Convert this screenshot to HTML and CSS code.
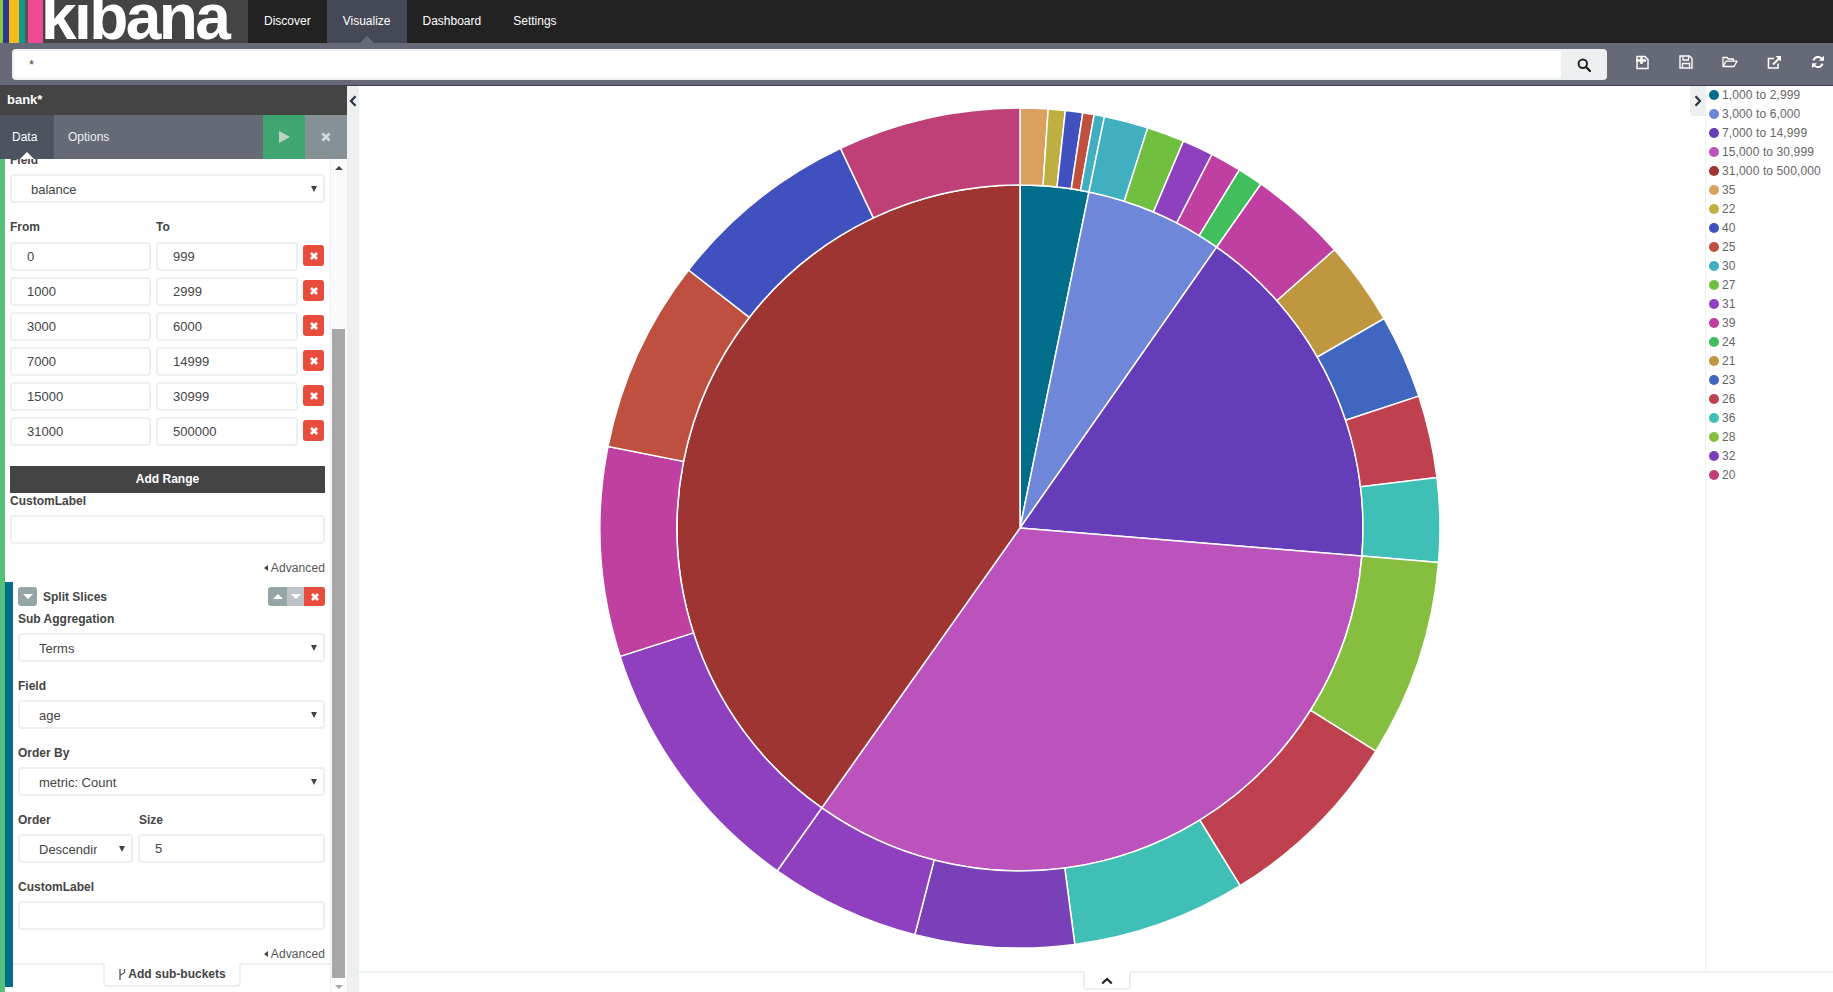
FILE: index.html
```html
<!DOCTYPE html>
<html lang="en">
<head>
<meta charset="UTF-8" />
<title>Visualize - Kibana</title>
<link rel="stylesheet" href="styles.css">
</head>
<body>

<nav class="navbar">
  <a class="logo">
    <span class="stripe s1"></span><span class="stripe s2"></span><span class="stripe s3"></span><span class="stripe s4"></span><span class="stripe s5"></span><span class="stripe s6"></span>
    <span class="logo-text">kibana</span>
  </a>
  <a class="nav-link">Discover</a>
  <a class="nav-link active">Visualize</a>
  <a class="nav-link">Dashboard</a>
  <a class="nav-link">Settings</a>
</nav>

<div class="toolbar">
  <div class="search">
    <input class="search-input" type="text" value="*">
    <button class="search-btn">
      <svg width="14" height="14" viewBox="0 0 14 14"><circle cx="5.8" cy="5.8" r="4.2" fill="none" stroke="#222" stroke-width="2"/><path d="M9 9l4 4" stroke="#222" stroke-width="2.4" stroke-linecap="round"/></svg>
    </button>
  </div>
  <div class="actions">
    <button class="action">
      <svg width="15" height="15" viewBox="0 0 15 15"><path d="M2 1.5h8l3 3v9H2z" fill="none" stroke="#fff" stroke-width="1.4"/><path d="M6.5 1v8M1 5.5h10" stroke="#fff" stroke-width="2.4"/></svg>
    </button>
    <button class="action">
      <svg width="14" height="14" viewBox="0 0 14 14"><path d="M1 1h9.5L13 3.5V13H1z" fill="none" stroke="#fff" stroke-width="1.4"/><path d="M4 1.5v3.5h5.5V1.5M3.5 13V8.5h7V13" fill="none" stroke="#fff" stroke-width="1.3"/></svg>
    </button>
    <button class="action">
      <svg width="16" height="14" viewBox="0 0 16 14"><path d="M1 11.5V2.5h4l1.3 1.5h5.2v2.2M1.2 11.5L4 6.2h11l-3 5.3z" fill="none" stroke="#fff" stroke-width="1.3" stroke-linejoin="round"/></svg>
    </button>
    <button class="action">
      <svg width="15" height="15" viewBox="0 0 15 15"><path d="M11 8.5V13H1.5V3.5H7" fill="none" stroke="#fff" stroke-width="1.6"/><path d="M6 9.5l6-6" stroke="#fff" stroke-width="2"/><path d="M8.5 1h5.5v5.5z" fill="#fff"/></svg>
    </button>
    <button class="action">
      <svg width="14" height="14" viewBox="0 0 14 14"><path d="M2.4 5.4A4.9 4.9 0 0 1 10.6 3.4" fill="none" stroke="#fff" stroke-width="2"/><path d="M13 0.8v5h-5z" fill="#fff"/><path d="M11.6 8.6A4.9 4.9 0 0 1 3.4 10.6" fill="none" stroke="#fff" stroke-width="2"/><path d="M1 13.2v-5h5z" fill="#fff"/></svg>
    </button>
  </div>
</div>

<main class="main">
  <aside class="sidebar">
    <div class="index-title">bank*</div>
    <div class="side-tabs">
      <a class="side-tab active">Data</a>
      <a class="side-tab">Options</a>
      <span class="tabs-fill"></span>
      <button class="run-btn"><svg width="13" height="14" viewBox="0 0 13 14"><path d="M1 1l11 6-11 6z" fill="#b9d6c4"/></svg></button>
      <button class="cancel-btn"><svg width="10" height="10" viewBox="0 0 10 10"><path d="M1.5 1.5l7 7M8.5 1.5l-7 7" stroke="#d4d9da" stroke-width="2.8"/></svg></button>
    </div>

    <div class="side-body">
      <div class="editor">
        <div class="editor-inner">
          <div class="group">
            <label class="lbl">Field</label>
            <div class="sel"><select class="ctl"><option>balance</option></select></div>
          </div>

          <div class="ranges">
            <label class="lbl">From</label>
            <label class="lbl">To</label>
            <span></span>
          </div>
          <div class="ranges rows">
            <input class="ctl txt" value="0"><input class="ctl txt" value="999"><button class="del"><svg width="10" height="10" viewBox="0 0 10 10"><path d="M2 2l6 6M8 2l-6 6" stroke="#fff" stroke-width="2.6"/></svg></button>
            <input class="ctl txt" value="1000"><input class="ctl txt" value="2999"><button class="del"><svg width="10" height="10" viewBox="0 0 10 10"><path d="M2 2l6 6M8 2l-6 6" stroke="#fff" stroke-width="2.6"/></svg></button>
            <input class="ctl txt" value="3000"><input class="ctl txt" value="6000"><button class="del"><svg width="10" height="10" viewBox="0 0 10 10"><path d="M2 2l6 6M8 2l-6 6" stroke="#fff" stroke-width="2.6"/></svg></button>
            <input class="ctl txt" value="7000"><input class="ctl txt" value="14999"><button class="del"><svg width="10" height="10" viewBox="0 0 10 10"><path d="M2 2l6 6M8 2l-6 6" stroke="#fff" stroke-width="2.6"/></svg></button>
            <input class="ctl txt" value="15000"><input class="ctl txt" value="30999"><button class="del"><svg width="10" height="10" viewBox="0 0 10 10"><path d="M2 2l6 6M8 2l-6 6" stroke="#fff" stroke-width="2.6"/></svg></button>
            <input class="ctl txt" value="31000"><input class="ctl txt" value="500000"><button class="del"><svg width="10" height="10" viewBox="0 0 10 10"><path d="M2 2l6 6M8 2l-6 6" stroke="#fff" stroke-width="2.6"/></svg></button>
          </div>

          <button class="add-range">Add Range</button>

          <div class="custom">
            <label class="lbl">CustomLabel</label>
            <input class="ctl txt">
          </div>
          <a class="advanced">Advanced</a>
        </div>

        <section class="bucket">
          <div class="bucket-head">
            <button class="toggle"><span class="caret-down"></span></button>
            <span class="bucket-title">Split Slices</span>
            <div class="btn-group">
              <button class="up"><span class="caret-up"></span></button>
              <button class="down"><span class="caret-down"></span></button>
              <button class="remove"><svg width="10" height="10" viewBox="0 0 10 10"><path d="M2 2l6 6M8 2l-6 6" stroke="#fff" stroke-width="2.6"/></svg></button>
            </div>
          </div>

          <div class="group">
            <label class="lbl">Sub Aggregation</label>
            <div class="sel"><select class="ctl"><option>Terms</option></select></div>
          </div>
          <div class="group">
            <label class="lbl">Field</label>
            <div class="sel"><select class="ctl"><option>age</option></select></div>
          </div>
          <div class="group">
            <label class="lbl">Order By</label>
            <div class="sel"><select class="ctl"><option>metric: Count</option></select></div>
          </div>
          <div class="group order-row">
            <div class="order-col">
              <label class="lbl">Order</label>
              <div class="sel"><select class="ctl"><option>Descending</option></select></div>
            </div>
            <div class="size-col">
              <label class="lbl">Size</label>
              <input class="ctl txt" value="5">
            </div>
          </div>
          <div class="group">
            <label class="lbl">CustomLabel</label>
            <input class="ctl txt">
          </div>
          <a class="advanced">Advanced</a>

          <div class="sub-bar">
            <a class="sub-tab">
              <svg width="9" height="13" viewBox="0 0 9 13"><path d="M3 1v11M7.5 1v3c0 2-4.5 2-4.5 4" fill="none" stroke="#444" stroke-width="1.2"/></svg>
              Add sub-buckets
            </a>
          </div>
        </section>
      </div>

      <div class="scrollbar">
        <span class="arrow-up"></span>
        <span class="thumb"></span>
        <span class="arrow-down"></span>
      </div>
    </div>
  </aside>

  <div class="gutter">
    <svg width="8" height="12" viewBox="0 0 8 12"><path d="M6.5 1.2L2 6l4.5 4.8" fill="none" stroke="#2d3240" stroke-width="2.2"/></svg>
  </div>

  <div class="viz">
    <div class="viz-top">
      <div class="chart"><svg id="pie" width="844" height="844" viewBox="-422 -422 844 844"></svg></div>
      <div class="legend-wrap">
        <button class="legend-toggle">
          <svg width="8" height="12" viewBox="0 0 8 12"><path d="M1.5 1.2L6 6l-4.5 4.8" fill="none" stroke="#2d3240" stroke-width="2.2"/></svg>
        </button>
        <ul class="legend" id="legend"></ul>
      </div>
    </div>
    <div class="spy">
      <a class="spy-tab">
        <svg width="12" height="8" viewBox="0 0 12 8"><path d="M1.2 6.5L6 2l4.8 4.5" fill="none" stroke="#222" stroke-width="2.2"/></svg>
      </a>
    </div>
  </div>
</main>

<script src="app.js"></script>
</body>
</html>
```

FILE: styles.css
```css
* {
  box-sizing: border-box;
}
html, body {
  height: 100%;
}
body {
  margin: 0;
  overflow: hidden;
  font-family: "Liberation Sans", Arial, sans-serif;
  font-size: 12px;
  color: #444;
  background: #fff;
  display: flex;
  flex-direction: column;
}
button {
  border: none;
  padding: 0;
  font: inherit;
  display: flex;
  align-items: center;
  justify-content: center;
}

/* top nav */
.navbar {
  height: 43px;
  flex: none;
  display: flex;
  background: #222;
}
.logo {
  width: 248px;
  height: 43px;
  display: flex;
  overflow: hidden;
  background: #444;
}
.stripe {
  height: 43px;
  flex: none;
}
.s1 { width: 3px; background: #8cc63f; }
.s2 { width: 6px; background: #2b3a8f; }
.s3 { width: 10px; background: #f5bb18; }
.s4 { width: 6px; background: #0f9a8c; }
.s5 { width: 3px; background: #555; }
.s6 { width: 15px; background: #ee4a93; }
.logo-text {
  font-size: 64px;
  font-weight: bold;
  line-height: 43px;
  letter-spacing: -2.6px;
  color: #fff;
  margin: -4px 0 0 -2px;
}
.nav-link {
  position: relative;
  padding: 0 16px;
  line-height: 42px;
  color: #fff;
}
.nav-link.active {
  background: #454955;
}
.nav-link.active::after {
  content: "";
  position: absolute;
  left: 50%;
  bottom: 0;
  margin-left: -7px;
  border: 7px solid transparent;
  border-top: 0;
  border-bottom-color: #656a76;
}

/* search bar */
.toolbar {
  height: 43px;
  flex: none;
  display: flex;
  align-items: flex-start;
  padding: 6px 0 0 12px;
  background: #656a76;
  border-bottom: 1px solid #3c4048;
}
.search {
  display: flex;
  width: 1595px;
  height: 31px;
}
.search-input {
  flex: 1;
  height: 31px;
  border: 2px solid #ecf0f1;
  border-right: 0;
  border-radius: 4px 0 0 4px;
  padding: 0 15px;
  font: 13px "Liberation Sans", Arial, sans-serif;
  color: #444;
  outline: none;
}
.search-btn {
  width: 46px;
  height: 31px;
  background: #ecf0f1;
  border-radius: 0 4px 4px 0;
}
.actions {
  margin-left: auto;
  display: flex;
  gap: 14px;
  height: 26px;
}
.action {
  width: 30px;
  height: 26px;
  background: none;
}

/* page body */
.main {
  flex: 1;
  min-height: 0;
  display: flex;
}
.sidebar {
  width: 347px;
  flex: none;
  display: flex;
  flex-direction: column;
}
.index-title {
  height: 29px;
  flex: none;
  padding-left: 7px;
  line-height: 28px;
  font-size: 13px;
  font-weight: bold;
  color: #fff;
  background: #444;
}
.side-tabs {
  height: 44px;
  flex: none;
  display: flex;
  background: #656a76;
}
.side-tab {
  position: relative;
  padding: 0 14px;
  line-height: 44px;
  color: #ecf0f1;
}
.side-tab.active {
  width: 54px;
  padding: 0 12px;
  background: #4e5360;
  color: #fff;
}
.side-tab.active::after {
  content: "";
  position: absolute;
  left: 50%;
  bottom: 0;
  margin-left: -7px;
  border: 7px solid transparent;
  border-top: 0;
  border-bottom-color: #fff;
}
.tabs-fill {
  flex: 1;
}
.run-btn {
  width: 42px;
  background: #3fa672;
}
.cancel-btn {
  width: 42px;
  background: #869196;
}

.side-body {
  flex: 1;
  min-height: 0;
  display: flex;
  overflow: hidden;
}
.editor {
  width: 330px;
  flex: none;
  border-left: 5px solid #55c07a;
  overflow: hidden;
}
.editor-inner {
  margin-top: -6px;
  padding: 0 5px 7px;
}

.lbl {
  display: block;
  height: 14px;
  line-height: 14px;
  margin-bottom: 7px;
  font-weight: bold;
  color: #444;
}
.ctl {
  display: block;
  width: 100%;
  height: 29px;
  border: 2px solid #ecf0f1;
  border-radius: 4px;
  background: #fff;
  font: 13px "Liberation Sans", Arial, sans-serif;
  color: #444;
  outline: none;
}
.txt {
  padding: 0 15px;
}
select.ctl {
  appearance: none;
  padding: 2px 34px 0 19px;
}
.sel {
  position: relative;
}
.sel::after {
  content: "";
  position: absolute;
  right: 8px;
  top: 12px;
  border: 3px solid transparent;
  border-bottom: 0;
  border-top: 6px solid #444;
}
.group {
  margin-bottom: 17px;
}
.ranges {
  display: grid;
  grid-template-columns: 141px 142px 21px;
  column-gap: 5px;
}
.ranges .lbl {
  margin-bottom: 8px;
}
.rows {
  row-gap: 6px;
}
.del {
  width: 21px;
  height: 21px;
  margin-top: 3px;
  background: #e74c3c;
  border-radius: 3px;
}
.add-range {
  width: 100%;
  height: 27px;
  margin-top: 20px;
  padding-bottom: 2px;
  font-weight: bold;
  color: #fff;
  background: #444;
}
.custom {
  margin-top: 1px;
}
.advanced {
  display: block;
  height: 14px;
  line-height: 14px;
  margin-top: 17px;
  text-align: right;
  letter-spacing: 0.1px;
  color: #555;
}
.advanced::before {
  content: "";
  display: inline-block;
  margin-right: 3px;
  vertical-align: 1px;
  border: 3px solid transparent;
  border-left: 0;
  border-right: 4px solid #444;
}

/* split slices */
.bucket {
  border-left: 8px solid #006e8a;
  padding: 5px 5px 0;
}
.bucket .advanced {
  margin-top: 0;
}
.bucket-head {
  display: flex;
  align-items: center;
  height: 19px;
  margin-bottom: 6px;
}
.toggle {
  width: 19px;
  height: 19px;
  background: #95a5a6;
  border-radius: 3px;
}
.bucket-title {
  margin-left: 6px;
  font-weight: bold;
}
.btn-group {
  margin-left: auto;
  display: flex;
  height: 19px;
}
.btn-group button {
  height: 19px;
}
.up {
  width: 19px;
  background: #95a5a6;
  border-radius: 3px 0 0 3px;
}
.down {
  width: 17px;
  background: #bdc3c7;
}
.remove {
  width: 21px;
  background: #e74c3c;
  border-radius: 0 3px 3px 0;
}
.caret-down, .caret-up {
  width: 0;
  height: 0;
  border: 5px solid transparent;
}
.caret-down {
  border-bottom: 0;
  border-top-color: #fff;
}
.caret-up {
  border-top: 0;
  border-bottom-color: #fff;
}
.order-row {
  display: flex;
  gap: 5px;
}
.order-col {
  width: 115px;
  flex: none;
}
.size-col {
  flex: 1;
}
.size-col .lbl {
  padding-left: 1px;
}
.sub-bar {
  display: flex;
  justify-content: center;
  margin: 2px -5px 0;
  border-top: 2px solid #ecf0f1;
}
.sub-tab {
  display: flex;
  align-items: center;
  justify-content: center;
  gap: 2px;
  width: 138px;
  height: 24px;
  margin-top: -2px;
  padding-bottom: 2px;
  background: #fff;
  border: 2px solid #ecf0f1;
  border-top-color: #fff;
  border-radius: 0 0 4px 4px;
  font-weight: bold;
}

/* fake scrollbar of the panel */
.scrollbar {
  width: 17px;
  flex: none;
  display: flex;
  flex-direction: column;
  align-items: center;
  padding-right: 1px;
  background: #fbfbfb;
  border-left: 1px solid #ecf0f1;
}
.arrow-up, .arrow-down {
  width: 0;
  height: 0;
  flex: none;
  border: 4px solid transparent;
}
.arrow-up {
  margin: 7px 0 159px;
  border-top: 0;
  border-bottom: 4px solid #444;
}
.arrow-down {
  margin: 7px 0 3px;
  border-bottom: 0;
  border-top: 4px solid #a8a8a8;
}
.thumb {
  flex: 1;
  width: 13px;
  background: #a8a8a8;
}

.gutter {
  width: 12px;
  flex: none;
  display: flex;
  justify-content: center;
  align-items: flex-start;
  padding-top: 9px;
  background: #ecf0f1;
}

/* chart + legend */
.viz {
  flex: 1;
  min-width: 0;
  display: flex;
  flex-direction: column;
}
.viz-top {
  flex: 1;
  min-height: 0;
  display: flex;
}
.chart {
  flex: 1;
  min-width: 0;
  display: flex;
  align-items: center;
  justify-content: center;
  padding: 0 9px 2px 0;
}
.legend-wrap {
  width: 143px;
  flex: none;
  display: flex;
}
.legend-toggle {
  width: 15px;
  height: 30px;
  flex: none;
  background: #ecf0f1;
  border-radius: 0 0 0 4px;
}
.legend {
  flex: 1;
  margin: 0;
  padding: 0 0 0 3px;
  list-style: none;
  border-left: 1px solid #ecf0f1;
}
.legend li {
  display: flex;
  align-items: center;
  height: 19px;
  letter-spacing: 0.12px;
  color: #666;
  white-space: nowrap;
  transform: translateY(-1px);
}
.dot {
  width: 10px;
  height: 10px;
  margin-right: 3px;
  border-radius: 50%;
}
.spy {
  height: 21px;
  flex: none;
  display: flex;
  justify-content: center;
  border-top: 2px solid #ecf0f1;
  padding-left: 22px;
}
.spy-tab {
  display: flex;
  align-items: center;
  justify-content: center;
  width: 48px;
  height: 19px;
  margin-top: -2px;
  background: #fff;
  border: 2px solid #ecf0f1;
  border-top-color: #fff;
  border-radius: 0 0 4px 4px;
}
```

FILE: app.js
```js
// slices in degrees, clockwise from 12 o'clock
const inner = [
  { end: 11.6, color: '#006e8a', label: '1,000 to 2,999' },
  { end: 35, color: '#6f87d8', label: '3,000 to 6,000' },
  { end: 94.7, color: '#663db8', label: '7,000 to 14,999' },
  { end: 215.3, color: '#bc52bc', label: '15,000 to 30,999' },
  { end: 360, color: '#9e3533', label: '31,000 to 500,000' }
];

const ages = {
  35: '#daa05d', 22: '#bfaf40', 40: '#4050bf', 25: '#bf5040', 30: '#40afbf',
  27: '#70bf40', 31: '#8f40bf', 39: '#bf40a0', 24: '#40bf5c', 21: '#bf9740',
  23: '#4067bf', 26: '#bf404f', 36: '#40bfb6', 28: '#86bf40', 32: '#7a40b8',
  20: '#bf4077'
};
const legendAges = [35, 22, 40, 25, 30, 27, 31, 39, 24, 21, 23, 26, 36, 28, 32, 20];

const outer = [
  [3.85, 35], [6.2, 22], [8.6, 40], [10.17, 25], [11.6, 30], [17.7, 30],
  [22.9, 27], [27.2, 31], [31.5, 39], [35, 24], [48.5, 39], [60.1, 21],
  [71.7, 23], [83.1, 26], [94.7, 36], [122.1, 28], [148.4, 26], [172.5, 36],
  [194.5, 32], [215.3, 31], [252.2, 31], [281.2, 39], [307.9, 25], [334.7, 40],
  [360, 20]
];

function point(r, deg) {
  const a = deg * Math.PI / 180;
  return (r * Math.sin(a)).toFixed(2) + ' ' + (-r * Math.cos(a)).toFixed(2);
}

function slice(r0, r1, a0, a1) {
  const large = a1 - a0 > 180 ? 1 : 0;
  let d = 'M' + point(r1, a0) + 'A' + r1 + ' ' + r1 + ' 0 ' + large + ' 1 ' + point(r1, a1);
  if (r0 > 0) {
    d += 'L' + point(r0, a1) + 'A' + r0 + ' ' + r0 + ' 0 ' + large + ' 0 ' + point(r0, a0) + 'Z';
  } else {
    d += 'L0 0Z';
  }
  return d;
}

const svg = document.getElementById('pie');
let html = '';
let start = 0;
inner.forEach(s => {
  html += '<path d="' + slice(0, 343, start, s.end) + '" fill="' + s.color + '" stroke="#fff" stroke-width="1.5"/>';
  start = s.end;
});
start = 0;
outer.forEach(s => {
  html += '<path d="' + slice(343, 420, start, s[0]) + '" fill="' + ages[s[1]] + '" stroke="#fff" stroke-width="1.5"/>';
  start = s[0];
});
svg.innerHTML = html;

const legendRows = inner.map(s => [s.color, s.label]).concat(legendAges.map(a => [ages[a], a]));
document.getElementById('legend').innerHTML = legendRows.map(r =>
  '<li><span class="dot" style="background:' + r[0] + '"></span>' + r[1] + '</li>'
).join('');
```
